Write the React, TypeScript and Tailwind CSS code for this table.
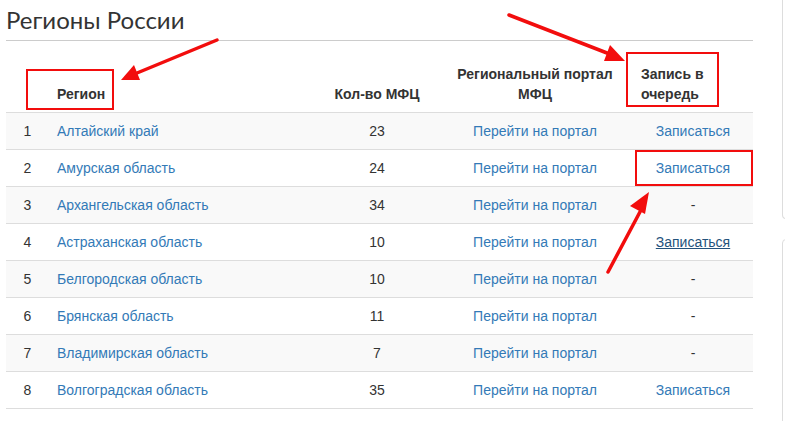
import { Fragment } from 'react';

type Region = {
  id: number;
  name: string;
  count: number;
  queue: 'link' | 'hover' | 'none';
};

const regions: Region[] = [
  { id: 1, name: 'Алтайский край', count: 23, queue: 'link' },
  { id: 2, name: 'Амурская область', count: 24, queue: 'link' },
  { id: 3, name: 'Архангельская область', count: 34, queue: 'none' },
  { id: 4, name: 'Астраханская область', count: 10, queue: 'hover' },
  { id: 5, name: 'Белгородская область', count: 10, queue: 'none' },
  { id: 6, name: 'Брянская область', count: 11, queue: 'none' },
  { id: 7, name: 'Владимирская область', count: 7, queue: 'none' },
  { id: 8, name: 'Волгоградская область', count: 35, queue: 'link' },
];

function Annotations() {
  return (
    <svg className="pointer-events-none absolute inset-0" width="785" height="421" viewBox="0 0 785 421">
      <g fill="none" stroke="#f20d0d" strokeWidth="2">
        <rect x="27" y="70" width="86" height="39" />
        <rect x="627" y="53" width="91" height="53" />
        <rect x="636" y="151" width="116" height="34" />
      </g>
      <g stroke="#f20d0d" strokeWidth="3.5" strokeLinecap="round">
        <line x1="217" y1="40" x2="137" y2="73" />
        <line x1="509" y1="15" x2="607" y2="53" />
        <line x1="608" y1="272" x2="641" y2="210" />
      </g>
      <g fill="#f20d0d">
        <polygon points="121,80 140,80 134,65" />
        <polygon points="625,61 604,61 610,45" />
        <polygon points="649,192 645,214 630,206" />
      </g>
    </svg>
  );
}

export default function App() {
  return (
    <div className="relative h-[421px] w-[785px] overflow-hidden bg-white text-[14px] leading-5 text-[#333]" style={{ fontFamily: '"Liberation Sans", Arial, sans-serif' }}>
      <div className="flex">
        <div className="ml-[6px] w-[747px] shrink-0">
          <h2 className="h-[41px] border-b border-[#ccc] pt-[6px] text-[24px] leading-7 font-normal text-[#333]" style={{ fontFamily: 'Lato, sans-serif' }}>
            Регионы России
          </h2>
          <table className="mt-[15px] w-full table-fixed border-collapse">
            <colgroup>
              <col className="w-[43px]" />
              <col className="w-[268px]" />
              <col className="w-[120px]" />
              <col className="w-[196px]" />
              <col className="w-[120px]" />
            </colgroup>
            <thead>
              <tr className="border-b border-[#ddd] align-bottom font-bold">
                <th className="p-2"></th>
                <th className="p-2 text-left">Регион</th>
                <th className="p-2 text-center">Кол-во МФЦ</th>
                <th className="p-2 text-center">Региональный портал МФЦ</th>
                <th className="p-2 text-left">Запись в очередь</th>
              </tr>
            </thead>
            <tbody>
              {regions.map((r) => (
                <Fragment key={r.id}>
                  <tr className={`border-b border-[#ddd] ${r.id % 2 === 1 ? 'bg-[#f9f9f9]' : 'bg-white'}`}>
                    <td className="h-[36px] p-2 text-center">{r.id}</td>
                    <td className="p-2 text-[#337ab7]">{r.name}</td>
                    <td className="p-2 text-center">{r.count}</td>
                    <td className="p-2 text-center text-[#337ab7]">Перейти на портал</td>
                    <td className="p-2 text-center">
                      {r.queue === 'none' && <span>-</span>}
                      {r.queue === 'link' && <span className="text-[#337ab7]">Записаться</span>}
                      {r.queue === 'hover' && <span className="text-[#23527c] underline">Записаться</span>}
                    </td>
                  </tr>
                </Fragment>
              ))}
            </tbody>
          </table>
        </div>
        <div className="ml-[29px] flex w-[40px] shrink-0 flex-col gap-[20px]">
          <div className="h-[219px] rounded-b-[4px] border border-t-0 border-[#ddd]" />
          <div className="h-[200px] rounded-t-[4px] border border-[#ddd]" />
        </div>
      </div>
      <Annotations />
    </div>
  );
}
